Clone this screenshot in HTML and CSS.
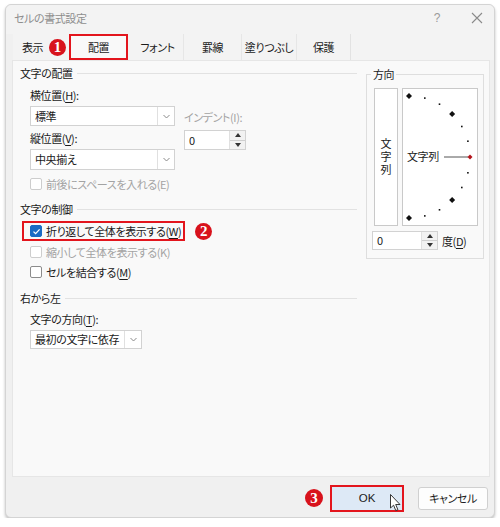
FILE: index.html
```html
<!DOCTYPE html>
<html lang="ja">
<head>
<meta charset="utf-8">
<link rel="stylesheet" href="styles.css">
</head>
<body>
<div class="window">
  <div class="titlebar">
    <span class="title">セルの書式設定</span>
    <span class="tb-help">?</span>
    <svg class="tb-close" width="12" height="12" viewBox="0 0 12 12"><path d="M1 1L11 11M11 1L1 11" stroke="#8a8a8a" stroke-width="1.1" fill="none"/></svg>
  </div>
  <div class="tabs">
    <div class="tab tab-a">表示</div>
    <div class="tab tab-b active">配置</div>
    <div class="tab tab-c">フォント</div>
    <div class="tab tab-d">罫線</div>
    <div class="tab tab-e">塗りつぶし</div>
    <div class="tab tab-f">保護</div>
    <span class="badge badge-tab">1</span>
  </div>
  <div class="panel">
    <div class="left">
      <div class="group-h"><span>文字の配置</span><i class="rule"></i></div>
      <div class="align-grid">
        <div class="col-main">
          <div class="lbl">横位置(<u>H</u>):</div>
          <div class="select s-wide"><span class="val">標準</span><span class="chev"><svg width="7" height="5" viewBox="0 0 7 5"><path d="M0.5 1L3.5 4L6.5 1" stroke="#8a8a8a" fill="none"/></svg></span></div>
          <div class="lbl lbl-gap">縦位置(<u>V</u>):</div>
          <div class="select s-wide s-second"><span class="val">中央揃え</span><span class="chev"><svg width="7" height="5" viewBox="0 0 7 5"><path d="M0.5 1L3.5 4L6.5 1" stroke="#8a8a8a" fill="none"/></svg></span></div>
        </div>
        <div class="col-indent">
          <div class="lbl dis">インデント(I):</div>
          <div class="spin spin-indent"><span class="val">0</span><span class="spin-btns"><span class="up"></span><span class="dn"></span></span></div>
        </div>
      </div>
      <div class="chk dis row-space"><span class="box"></span>前後にスペースを入れる(E)</div>

      <div class="group-h g2"><span>文字の制御</span><i class="rule"></i></div>
      <div class="wrap-row">
        <div class="hl-box"><span class="box checked"><svg width="9" height="9" viewBox="0 0 9 9"><path d="M1.5 4.6L3.6 6.6L7.6 2.4" stroke="#fff" stroke-width="1.3" fill="none"/></svg></span>折り返して全体を表示する(<u>W</u>)</div>
        <span class="badge">2</span>
      </div>
      <div class="chk dis row-shrink"><span class="box"></span>縮小して全体を表示する(K)</div>
      <div class="chk row-merge"><span class="box"></span>セルを結合する(<u>M</u>)</div>

      <div class="group-h g3"><span>右から左</span><i class="rule"></i></div>
      <div class="lbl lbl-dir">文字の方向(<u>T</u>):</div>
      <div class="select s-dir"><span class="val">最初の文字に依存</span><span class="chev"><svg width="7" height="5" viewBox="0 0 7 5"><path d="M0.5 1L3.5 4L6.5 1" stroke="#8a8a8a" fill="none"/></svg></span></div>
    </div>

    <fieldset class="dir">
      <legend>方向</legend>
      <div class="dir-row">
        <div class="vbox"><span class="vtext">文字列</span></div>
        <div class="dial">
          <svg width="76" height="138" viewBox="0 0 76 138">
            <g fill="#111">
              <path d="M7 5L10 8L7 11L4 8Z"/>
              <rect x="22" y="9.3" width="1.6" height="1.6"/>
              <rect x="36.7" y="15.4" width="1.6" height="1.6"/>
              <path d="M50.1 22.9L53.1 25.9L50.1 28.9L47.1 25.9Z"/>
              <rect x="59" y="37.7" width="1.6" height="1.6"/>
              <rect x="65.1" y="52.4" width="1.6" height="1.6"/>
              <rect x="65.1" y="84" width="1.6" height="1.6"/>
              <rect x="59" y="98.7" width="1.6" height="1.6"/>
              <path d="M50.1 109.1L53.1 112.1L50.1 115.1L47.1 112.1Z"/>
              <rect x="36.7" y="121" width="1.6" height="1.6"/>
              <rect x="22" y="127.1" width="1.6" height="1.6"/>
              <path d="M7 127L10 130L7 133L4 130Z"/>
            </g>
            <line x1="42" y1="69" x2="66" y2="69" stroke="#555" stroke-width="1"/>
            <path d="M68 66.5L70.5 69L68 71.5L65.5 69Z" fill="#b3141b"/>
            <text x="5" y="73" class="dial-text">文字列</text>
          </svg>
        </div>
      </div>
      <div class="deg-row">
        <div class="spin spin-deg"><span class="val">0</span><span class="spin-btns"><span class="up"></span><span class="dn"></span></span></div>
        <span class="deg-lbl">度(<u>D</u>)</span>
      </div>
    </fieldset>
  </div>
  <div class="footer">
    <span class="badge">3</span>
    <div class="btn btn-ok">OK
      <svg class="cursor" width="11" height="18" viewBox="0 0 11 18"><path d="M0.5 0.5L0.5 14L3.6 11.2L5.8 16.6L7.9 15.7L5.7 10.5L10 10.5Z" fill="#fff" stroke="#222" stroke-width="0.9" stroke-linejoin="round"/></svg>
    </div>
    <div class="btn btn-cancel">キャンセル</div>
  </div>
</div>
</body>
</html>
```

FILE: styles.css
```css
* { box-sizing: border-box; }
html, body { margin: 0; padding: 0; background: #ffffff; }
body {
  font-family: "Noto Sans CJK JP", "Noto Sans", sans-serif;
  font-feature-settings: "palt";
  font-size: 11px;
  letter-spacing: -0.4px;
  color: #1b1b1b;
}
u { text-decoration-thickness: 1px; text-underline-offset: 2px; }

.window {
  margin: 4px 5px 0 5px;
  width: 490px;
  height: 514px;
  background: #f0f0f0;
  border: 1px solid #d4d4d4;
  border-radius: 6px;
  box-shadow: 0 2px 3px rgba(0,0,0,0.25);
  display: flex;
  flex-direction: column;
}

.titlebar {
  height: 29px;
  display: flex;
  align-items: center;
  padding: 0 0 3px 8px;
  background: #f3f3f3;
  border-radius: 6px 6px 0 0;
}
.title { color: #8e8e8e; font-size: 11px; flex: 1; }
.tb-help { color: #9a9a9a; font-size: 12px; font-family: "Liberation Sans", sans-serif; margin-right: 31px; }
.tb-close { margin-right: 11px; }

.tabs {
  position: relative;
  display: flex;
  height: 26px;
  margin-left: 7px;
  background: #f3f3f3;
}
.tab {
  display: flex;
  align-items: center;
  justify-content: center;
  height: 26px;
  border-right: 1px solid #e6e6e6;
  color: #1b1b1b;
}
.tab-a { width: 56px; justify-content: flex-start; padding-left: 9px; border-right: none; }
.tab-b { width: 59px; }
.tab-c { width: 52px; margin-left: 4px; }
.tab-d { width: 58px; }
.tab-e { width: 55px; }
.tab-f { width: 54px; border-right: 1px solid #e2e2e2; }
.tab.active {
  border: 2px solid #e3151d;
  background: #f9f9f9;
}

.badge {
  width: 17px;
  height: 17px;
  border-radius: 50%;
  background: #d8121c;
  color: #fff;
  font-family: "Liberation Serif", serif;
  font-weight: bold;
  font-size: 15px;
  letter-spacing: 0;
  line-height: 17px;
  text-align: center;
  display: inline-block;
}
.badge-tab { position: absolute; left: 36px; top: 5px; }

.panel {
  height: 417px;
  margin: 0 4px 0 6px;
  background: #f9f9f9;
  border: 1px solid #e6e6e6;
  display: flex;
  gap: 9px;
  padding: 4px 0 0 7px;
}
.left { width: 337px; display: flex; flex-direction: column; align-items: flex-start; }

.group-h { display: flex; align-items: center; height: 16px; width: 100%; }
.group-h span { white-space: nowrap; }
.group-h .rule { flex: 1; height: 1px; background: #e2e2e2; margin-left: 4px; }
.g2 { margin-top: 9px; }
.g3 { margin-top: 10px; }

.lbl { height: 16px; line-height: 16px; margin-left: 10px; }
.dis { color: #a3a3a3; }

.align-grid { display: flex; gap: 9px; margin-top: 6px; }
.col-main { display: flex; flex-direction: column; }
.col-indent { padding-top: 22px; }
.col-indent .lbl { margin-left: 0; }
.lbl-gap { margin-top: 4px; }

.select {
  display: flex;
  align-items: stretch;
  background: #fff;
  border: 1px solid #d2d2d2;
  height: 20px;
  margin-top: 3px;
  margin-left: 10px;
}
.select .val { flex: 1; padding-left: 4px; line-height: 18px; white-space: nowrap; }
.select .chev {
  width: 17px;
  border-left: 1px solid #e0e0e0;
  display: flex;
  align-items: center;
  justify-content: center;
}
.s-wide { width: 145px; }
.s-second { height: 21px; }
.s-dir { width: 112px; height: 19px; }
.s-dir .val { line-height: 17px; }

.spin {
  display: flex;
  background: #fff;
  border: 1px solid #d2d2d2;
  height: 20px;
}
.spin .val { flex: 1; padding-left: 4px; line-height: 18px; }
.spin-btns {
  width: 16px;
  display: flex;
  flex-direction: column;
  border-left: 1px solid #e0e0e0;
  background: #f2f2f2;
}
.spin-btns .up, .spin-btns .dn {
  flex: 1;
  display: flex;
  align-items: center;
  justify-content: center;
}
.spin-btns .up { border-bottom: 1px solid #cfcfcf; }
.spin-btns .up::after {
  content: "";
  border-left: 3.5px solid transparent;
  border-right: 3.5px solid transparent;
  border-bottom: 4px solid #333;
}
.spin-btns .dn::after {
  content: "";
  border-left: 3.5px solid transparent;
  border-right: 3.5px solid transparent;
  border-top: 4px solid #333;
}
.spin-indent { width: 62px; margin-top: 5px; }

.chk { display: flex; align-items: center; height: 16px; margin-left: 10px; white-space: nowrap; }
.box {
  width: 12px;
  height: 12px;
  border: 1px solid #8c8c8c;
  border-radius: 2px;
  background: #fff;
  margin-right: 4px;
  display: inline-flex;
  align-items: center;
  justify-content: center;
  flex: none;
}
.chk.dis .box { border-color: #cdcdcd; }
.box.checked { background: #1a6bc4; border-color: #1a6bc4; }
.row-space { margin-top: 6px; }
.row-shrink { margin-top: 3px; }
.row-merge { margin-top: 4px; }

.wrap-row { display: flex; align-items: center; gap: 10px; margin-top: 4px; margin-left: 2px; }
.hl-box {
  display: flex;
  align-items: center;
  height: 20px;
  border: 2px solid #e3151d;
  padding: 0 2px 0 6px;
  white-space: nowrap;
}

.lbl-dir { margin-top: 5px; }

.dir {
  width: 118px;
  height: 193px;
  margin: 1px 0 0 0;
  border: 1px solid #dedede;
  padding: 0 5px 7px 7px;
  min-width: 0;
}
.dir legend { padding: 0 2px; margin-left: -3px; line-height: 16px; }
.dir-row { display: flex; gap: 4px; margin-top: 6px; }
.vbox {
  width: 24px;
  height: 138px;
  background: #fff;
  border: 1px solid #c9c9c9;
  display: flex;
  align-items: center;
  justify-content: center;
}
.vtext { writing-mode: vertical-rl; letter-spacing: 2px; line-height: 14px; }
.dial {
  width: 76px;
  height: 138px;
  background: #fff;
  border: 1px solid #c9c9c9;
  position: relative;
}
.dial svg { position: absolute; left: -1px; top: -1px; }
.dial-text { font-family: "Noto Sans CJK JP", sans-serif; font-size: 11px; fill: #1b1b1b; }

.deg-row { display: flex; align-items: center; gap: 4px; margin-top: 5px; margin-left: -2px; }
.spin-deg { width: 66px; height: 19px; }
.spin-deg .val { line-height: 17px; }

.footer {
  flex: 1;
  display: flex;
  align-items: center;
  justify-content: flex-end;
  padding: 2px 6px 0 0;
}
.footer .badge { margin-right: 7px; width: 18px; height: 18px; line-height: 18px; }
.btn {
  display: flex;
  align-items: center;
  justify-content: center;
  font-size: 11px;
  position: relative;
}
.btn-ok {
  width: 74px;
  height: 27px;
  background: #dde9f6;
  border: 2px solid #e3151d;
  font-family: "Liberation Sans", sans-serif;
  font-size: 11.5px;
  letter-spacing: 0;
  margin-right: 14px;
}
.cursor { position: absolute; left: 58px; top: 7px; }
.btn-cancel {
  width: 70px;
  height: 23px;
  background: #fdfdfd;
  border: 1px solid #d0d0d0;
  border-radius: 3px;
}
```
